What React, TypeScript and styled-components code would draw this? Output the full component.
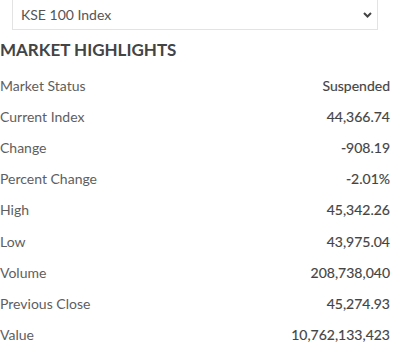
import React from "react";
import styled, { createGlobalStyle } from "styled-components";

const Global = createGlobalStyle`
  html, body { margin: 0; padding: 0; background: #fff; }
  body { font-family: Lato, "Open Sans", Arial, sans-serif; }
`;

const Wrap = styled.div`
  width: 390px;
  display: flex;
  flex-direction: column;
`;

const SelectBox = styled.div`
  margin: 0 12px 0 12px;
  height: 30px;
  box-sizing: border-box;
  border: 1px solid #e3e3e3;
  border-top: none;
  display: flex;
  align-items: center;
  justify-content: space-between;
  padding: 0 5px 0 8px;
  font-size: 14px;
  color: #555;
`;

const Heading = styled.h2`
  margin: 9px 0 9px 0;
  font-size: 17px;
  font-weight: 700;
  color: #444;
  letter-spacing: 0;
  line-height: 22px;
`;

const List = styled.div`
  display: flex;
  flex-direction: column;
`;

const Row = styled.div`
  display: flex;
  justify-content: space-between;
  align-items: center;
  height: 31.1px;
  font-size: 14px;
`;

const Label = styled.span`
  color: #5e5e5e;
`;

const Value = styled.span`
  color: #444;
  font-weight: 400;
  -webkit-text-stroke: 0.15px #444;
`;

const rows: [string, string][] = [
  ["Market Status", "Suspended"],
  ["Current Index", "44,366.74"],
  ["Change", "-908.19"],
  ["Percent Change", "-2.01%"],
  ["High", "45,342.26"],
  ["Low", "43,975.04"],
  ["Volume", "208,738,040"],
  ["Previous Close", "45,274.93"],
  ["Value", "10,762,133,423"],
];

export default function App() {
  return (
    <Wrap>
      <Global />
      <SelectBox>
        <span>KSE 100 Index</span>
        <svg width="9" height="6" viewBox="0 0 9 6">
          <path d="M1 1 L4.5 4.5 L8 1" fill="none" stroke="#444" strokeWidth="2" />
        </svg>
      </SelectBox>
      <Heading>MARKET HIGHLIGHTS</Heading>
      <List>
        {rows.map(([l, v]) => (
          <Row key={l}>
            <Label>{l}</Label>
            <Value>{v}</Value>
          </Row>
        ))}
      </List>
    </Wrap>
  );
}
